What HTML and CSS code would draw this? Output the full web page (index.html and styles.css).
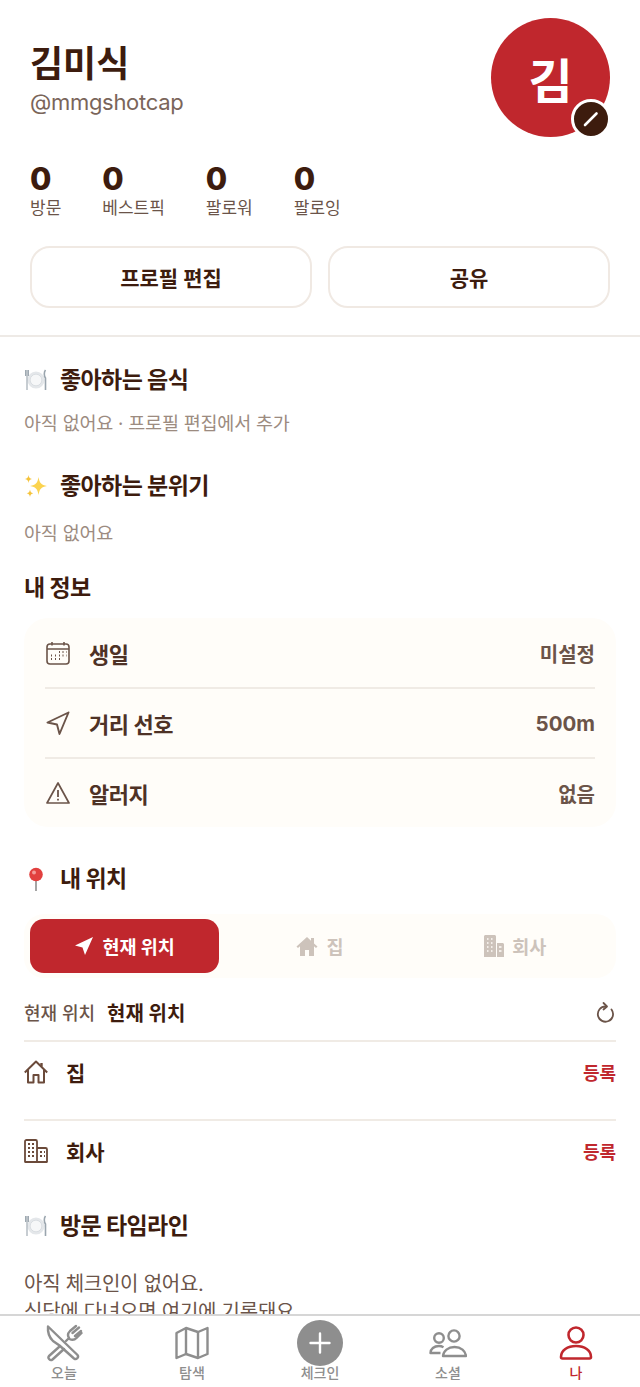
FILE: index.html
```html
<!DOCTYPE html>
<html lang="ko">
<head>
  <meta charset="UTF-8" />
  <title>김미식</title>
  <link rel="stylesheet" href="styles.css">
</head>
<body>
  <main class="page">
    <section class="profile">
      <div class="profile-top">
        <div class="who">
          <h1 class="name">김미식</h1>
          <div class="handle">@mmgshotcap</div>
        </div>
        <div class="avatar">김
          <span class="avatar-edit">
            <svg width="20" height="20" viewBox="0 0 20 20"><path d="M4 16 15.500 4.500" stroke="#fff" stroke-width="2.600" stroke-linecap="round"/></svg>
          </span>
        </div>
      </div>
      <div class="stats">
        <div class="stat"><b>0</b><span>방문</span></div>
        <div class="stat"><b>0</b><span>베스트픽</span></div>
        <div class="stat"><b>0</b><span>팔로워</span></div>
        <div class="stat"><b>0</b><span>팔로잉</span></div>
      </div>
      <div class="actions">
        <button class="btn">프로필 편집</button>
        <button class="btn">공유</button>
      </div>
    </section>

    <section class="content">
      <h2 class="head head-food">
        <svg class="emoji" viewBox="0 0 24 24">
          <circle cx="12" cy="12" r="8.600" fill="#e4e7ea"/><circle cx="12" cy="12" r="5.800" fill="#f6f7f8" stroke="#ced3d8" stroke-width=".6"/>
          <path d="M1.600 2v6M3 2v20M4.400 2v6" stroke="#9aa5ae" stroke-width="1.100"/><path d="M21.500 2c-1.600 2-1.600 6 0 8v12" fill="none" stroke="#9aa5ae" stroke-width="1.600"/>
        </svg>
        좋아하는 음식
      </h2>
      <p class="empty">아직 없어요 · 프로필 편집에서 추가</p>

      <h2 class="head head-mood">
        <svg class="emoji" viewBox="0 0 24 24">
          <path d="M14.500 3c1 6 2.500 7.800 8.500 9-6 1.200-7.500 3-8.500 9-1-6-2.500-7.800-8.500-9 6-1.200 7.500-3 8.500-9z" fill="#fbd34f"/>
          <path d="M4.500 1c.4 2.600 1.200 3.500 3.500 4-2.300.5-3.100 1.400-3.500 4-.4-2.600-1.200-3.500-3.500-4 2.300-.5 3.100-1.400 3.500-4zM6 15.500c.4 2.500 1.100 3.300 3.300 3.800-2.200.5-2.900 1.300-3.300 3.700-.4-2.400-1.100-3.200-3.300-3.700 2.200-.5 2.900-1.300 3.300-3.800z" fill="#f5c33b"/>
        </svg>
        좋아하는 분위기
      </h2>
      <p class="empty empty-mood">아직 없어요</p>

      <h2 class="head head-info">내 정보</h2>
      <div class="card">
        <div class="info-row">
          <svg class="ico" viewBox="0 0 24 24" fill="none" stroke="#6b5449" stroke-width="1.600"><rect x="1" y="3" width="22" height="20" rx="3"/><path d="M1 8h22M6 1v3.500M18 1v3.500"/><path d="M13 11h1M16.500 11h1M20 11h.5M5 14.500h1M9 14.500h1M13 14.500h1M16.500 14.500h1M20 14.500h.5M5 18h1M9 18h1M13 18h1" stroke-width="1.800"/></svg>
          <span class="info-label">생일</span><span class="info-value">미설정</span>
        </div>
        <div class="info-row">
          <svg class="ico" viewBox="0 0 24 24" fill="none" stroke="#6b5449" stroke-width="1.900" stroke-linejoin="round"><path d="M22.500 1.500 1.500 11.500l9.500 2 2.500 9.500z"/></svg>
          <span class="info-label">거리 선호</span><span class="info-value value-strong">500m</span>
        </div>
        <div class="info-row">
          <svg class="ico" viewBox="0 0 24 24" fill="none" stroke="#6b5449" stroke-width="1.700" stroke-linejoin="round"><path d="M12 2 1 22h22z"/><path d="M12 9v7M12 17.800v1.700" stroke-width="1.800"/></svg>
          <span class="info-label">알러지</span><span class="info-value">없음</span>
        </div>
      </div>

      <h2 class="head head-loc">
        <svg class="emoji" viewBox="0 0 24 24">
          <path d="M12 11v13" stroke="#9b9b9b" stroke-width="1.800"/><circle cx="12" cy="7.500" r="6.800" fill="#e2403f"/><circle cx="10" cy="5.500" r="2" fill="#f49a98"/>
        </svg>
        내 위치
      </h2>
      <div class="seg">
        <div class="seg-item active">
          <svg width="20" height="20" viewBox="0 0 20 20"><path d="M19 1 1 9.500l7.500 2L11 19z" fill="#fff"/></svg>
          현재 위치
        </div>
        <div class="seg-item">
          <svg width="22" height="20" viewBox="0 0 22 20"><path d="M11 1 0.500 10.500 2 12l2-1.700V20h5v-6h4v6h5v-9.700l2 1.700 1.500-1.500L18 7.500V2h-3v2.800z" fill="#cdc3bb"/></svg>
          집
        </div>
        <div class="seg-item">
          <svg width="20" height="22" viewBox="0 0 20 22"><path d="M0 1.500C0 .7.700 0 1.500 0h9c.8 0 1.500.7 1.500 1.500V22H0zM13 8h5.500c.8 0 1.500.7 1.500 1.500V22h-7z" fill="#cdc3bb"/><path d="M3 4h1.500M7 4h1.500M3 8h1.500M7 8h1.500M3 12h1.500M7 12h1.500M3 16h1.500M7 16h1.500M15 12h2.500M15 16h2.500" stroke="#fffdf9" stroke-width="1.500"/></svg>
          회사
        </div>
      </div>
      <div class="place-now">
        <span class="place-now-label">현재 위치</span><span class="place-now-value">현재 위치</span>
        <svg class="refresh" width="20" height="22" viewBox="0 0 20 22" fill="none" stroke="#6b5449" stroke-width="1.800" stroke-linecap="round" stroke-linejoin="round"><path d="M15.500 8.500A7.600 7.600 0 1 1 9.500 5.500"/><path d="M7.500 2 11 5.500 7.500 8.500"/></svg>
      </div>
      <div class="place">
        <svg class="ico" viewBox="0 0 24 24" fill="none" stroke="#6b4a3a" stroke-width="2" stroke-linejoin="round"><path d="M0.800 12.500 12 1.500l11.200 11"/><path d="M4 10v12.500h5.500V15h5v7.500H20V10"/><path d="M17.500 3v3.500" stroke-width="2.400"/></svg>
        <span class="place-name">집</span><span class="register">등록</span>
      </div>
      <div class="place place-work">
        <svg class="ico" viewBox="0 0 24 24" fill="none" stroke="#6b4a3a" stroke-width="1.800"><path d="M1 23V2.500C1 1.700 1.700 1 2.500 1h9c.8 0 1.500.7 1.500 1.500V23M13 9h8.500c.8 0 1.500.7 1.500 1.500V23M.5 23h23"/><path d="M4 5h2M8 5h2M4 9h2M8 9h2M4 13h2M8 13h2M4 17h2M8 17h2M16 13h2M20 13h1M16 17h2M20 17h1" stroke-width="2"/></svg>
        <span class="place-name">회사</span><span class="register">등록</span>
      </div>

      <h2 class="head head-time">
        <svg class="emoji" viewBox="0 0 24 24">
          <circle cx="12" cy="12" r="8.600" fill="#e4e7ea"/><circle cx="12" cy="12" r="5.800" fill="#f6f7f8" stroke="#ced3d8" stroke-width=".6"/>
          <path d="M1.600 2v6M3 2v20M4.400 2v6" stroke="#9aa5ae" stroke-width="1.100"/><path d="M21.500 2c-1.600 2-1.600 6 0 8v12" fill="none" stroke="#9aa5ae" stroke-width="1.600"/>
        </svg>
        방문 타임라인
      </h2>
      <p class="timeline-empty">아직 체크인이 없어요.<br>식당에 다녀오면 여기에 기록돼요.</p>
    </section>
  </main>

  <nav class="tabbar">
    <div class="tab">
      <span class="tab-ico">
        <svg width="38" height="38" viewBox="0 0 38 38" fill="none" stroke="#8e8e8e" stroke-width="2.400" stroke-linejoin="round" stroke-linecap="round"><path d="M3 2.500 32.500 31a2.500 2.500 0 0 1-3.500 3.500L14.500 21.500 8 17C4 13 2.500 8 3 2.500z"/><path d="M14 23 4 32a2.500 2.500 0 0 0 3.500 3.500L19 25"/><path d="M21 17l3-3c-2-3-1-5 1-7l6-5M27.500 9 34 3.500M30 12l6-5M24.500 15c3 1.500 5 1 7-1l5-5"/></svg>
      </span>
      <span class="tab-label">오늘</span>
    </div>
    <div class="tab">
      <span class="tab-ico">
        <svg width="36" height="36" viewBox="0 0 36 36" fill="none" stroke="#8e8e8e" stroke-width="2.400" stroke-linejoin="round"><path d="M2.500 8 12 3l12 4 9.500-4v26L24 33l-12-4-9.500 4z"/><path d="M12 3v26M24 7v26"/></svg>
      </span>
      <span class="tab-label">탐색</span>
    </div>
    <div class="tab">
      <span class="tab-ico">
        <span class="plus"><svg width="24" height="24" viewBox="0 0 24 24"><path d="M12 2.500v19M2.500 12h19" stroke="#fff" stroke-width="2.400" stroke-linecap="round"/></svg></span>
      </span>
      <span class="tab-label">체크인</span>
    </div>
    <div class="tab">
      <span class="tab-ico">
        <svg width="38" height="36" viewBox="0 0 38 36" fill="none" stroke="#8e8e8e" stroke-width="2.400" stroke-linejoin="round"><circle cx="10" cy="13" r="4.800"/><circle cx="25" cy="11" r="5.600"/><path d="M14 31c.5-5 5-9 11.500-9s11 4 11.500 9z"/><path d="M14.500 22.200c-1.300-.7-2.800-1.200-4.500-1.200-5 0-8.500 3-8.500 7h10"/></svg>
      </span>
      <span class="tab-label">소셜</span>
    </div>
    <div class="tab tab-on">
      <span class="tab-ico">
        <svg width="34" height="36" viewBox="0 0 34 36" fill="none" stroke="#c0272d" stroke-width="2.600" stroke-linejoin="round"><circle cx="17" cy="10" r="7.500"/><path d="M2 32c0-6.500 6.500-11 15-11s15 4.500 15 11c0 1-.6 1.500-1.500 1.500h-27C2.600 33.500 2 33 2 32z"/></svg>
      </span>
      <span class="tab-label">나</span>
    </div>
  </nav>
</body>
</html>
```

FILE: styles.css
```css
* {
  box-sizing: border-box;
}
html, body {
  margin: 0;
  height: 100%;
}
body {
  display: flex;
  flex-direction: column;
  height: 1387px;
  overflow: hidden;
  background: #fff;
  color: #3d1c0e;
  font-family: "Inter", "Noto Sans CJK KR", sans-serif;
}
.page {
  flex: 1;
  min-height: 0;
  overflow: hidden;
}
.profile {
  padding: 18px 30px 27px;
  border-bottom: 2px solid #eeeae6;
}
.profile-top {
  display: flex;
  justify-content: space-between;
}
.who {
  padding-top: 21px;
}
.name {
  margin: 0;
  font-size: 36px;
  line-height: 50px;
  font-weight: 700;
}
.handle {
  font-size: 22px;
  line-height: 27px;
  letter-spacing: -0.3px;
  color: #7a655a;
}
.avatar {
  position: relative;
  width: 119px;
  height: 119px;
  border-radius: 50%;
  background: #c0272d;
  color: #fff;
  font-size: 48px;
  font-weight: 700;
  display: flex;
  align-items: center;
  justify-content: center;
}
.avatar-edit {
  position: absolute;
  right: -1px;
  bottom: -2px;
  width: 40px;
  height: 40px;
  border-radius: 50%;
  background: #3d1c0e;
  border: 3px solid #fff;
  display: flex;
  align-items: center;
  justify-content: center;
}
.stats {
  display: flex;
  gap: 41px;
  margin-top: 24px;
}
.stat {
  display: flex;
  flex-direction: column;
}
.stat b {
  font-size: 31px;
  line-height: 36px;
  font-weight: 800;
}
.stat span {
  font-size: 17px;
  line-height: 22px;
  color: #6b5449;
}
.actions {
  display: flex;
  gap: 16px;
  margin-top: 27px;
}
.btn {
  flex: 1;
  height: 62px;
  background: #fff;
  border: 2px solid #f0e9e3;
  border-radius: 20px;
  color: #3d1c0e;
  font-family: inherit;
  font-size: 21px;
  font-weight: 700;
}
.content {
  padding: 0 24px;
}
.head {
  display: flex;
  align-items: center;
  gap: 12px;
  margin: 0;
  font-size: 23px;
  letter-spacing: -0.6px;
  line-height: 34px;
  font-weight: 700;
}
.emoji {
  width: 24px;
  height: 24px;
}
.head-food {
  margin-top: 26px;
}
.head-mood {
  margin-top: 31px;
}
.head-info {
  margin-top: 23px;
}
.head-loc {
  margin-top: 35px;
}
.head-time {
  margin-top: 9px;
}
.empty {
  margin: 11px 0 0;
  font-size: 18.5px;
  letter-spacing: -0.2px;
  line-height: 30px;
  color: #9c8b80;
}
.empty-mood {
  margin-top: 15px;
}
.card {
  margin-top: 13px;
  padding: 1px 21px 0;
  background: #fffdf9;
  border-radius: 24px;
}
.info-row {
  display: flex;
  align-items: center;
  height: 70px;
  border-bottom: 2px solid #f0ebe5;
}
.info-row:last-child {
  border-bottom: 0;
  height: 68px;
}
.ico {
  width: 24px;
  height: 24px;
  flex: none;
}
.info-row .ico {
  margin-left: 1px;
}
.info-label {
  margin-left: 19px;
  font-size: 22px;
  letter-spacing: -0.5px;
  font-weight: 600;
  color: #4e3226;
}
.info-value {
  margin-left: auto;
  font-size: 20px;
  font-weight: 600;
  color: #6b5449;
}
.value-strong {
  font-size: 20.5px;
  font-weight: 700;
}
.seg {
  display: flex;
  gap: 6px;
  margin-top: 18px;
  padding: 5px 6px;
  background: #fffdf9;
  border-radius: 20px;
}
.seg-item {
  flex: 1;
  height: 54px;
  display: flex;
  align-items: center;
  justify-content: center;
  gap: 8px;
  border-radius: 14px;
  font-size: 18.5px;
  font-weight: 700;
  color: #cdc3bb;
}
.seg-item.active {
  background: #c0272d;
  color: #fff;
}
.place-now {
  display: flex;
  align-items: center;
  height: 64px;
  padding-top: 6px;
  border-bottom: 2px solid #f0ebe5;
}
.place-now-label {
  font-size: 18px;
  font-weight: 500;
  color: #6b5449;
}
.place-now-value {
  margin-left: 12px;
  font-size: 20px;
  font-weight: 700;
}
.refresh {
  margin-left: auto;
}
.place {
  display: flex;
  align-items: center;
  height: 79px;
  padding-bottom: 18px;
  border-bottom: 2px solid #f0ebe5;
}
.place-work {
  padding-bottom: 20px;
  border-bottom: 0;
}
.place-name {
  margin-left: 18px;
  font-size: 21px;
  font-weight: 700;
}
.register {
  margin-left: auto;
  font-size: 18px;
  font-weight: 700;
  color: #c0272d;
}
.timeline-empty {
  margin: 27px 0 0;
  font-size: 20px;
  letter-spacing: -0.25px;
  line-height: 28px;
  color: #6b5449;
}
.tabbar {
  display: flex;
  flex: none;
  height: 73px;
  background: #fff;
  border-top: 2px solid #d6d6d6;
}
.tab {
  flex: 1;
  display: flex;
  flex-direction: column;
  align-items: center;
  padding-top: 6px;
  font-size: 14px;
  font-weight: 500;
  line-height: 18px;
  color: #8e8e8e;
}
.tab-ico {
  height: 42px;
  display: flex;
  align-items: center;
  justify-content: center;
}
.tab-on {
  color: #c0272d;
}
.plus {
  flex: none;
  width: 46px;
  height: 46px;
  display: flex;
  align-items: center;
  justify-content: center;
  background: #8e8e8e;
  border-radius: 50%;
}
```
